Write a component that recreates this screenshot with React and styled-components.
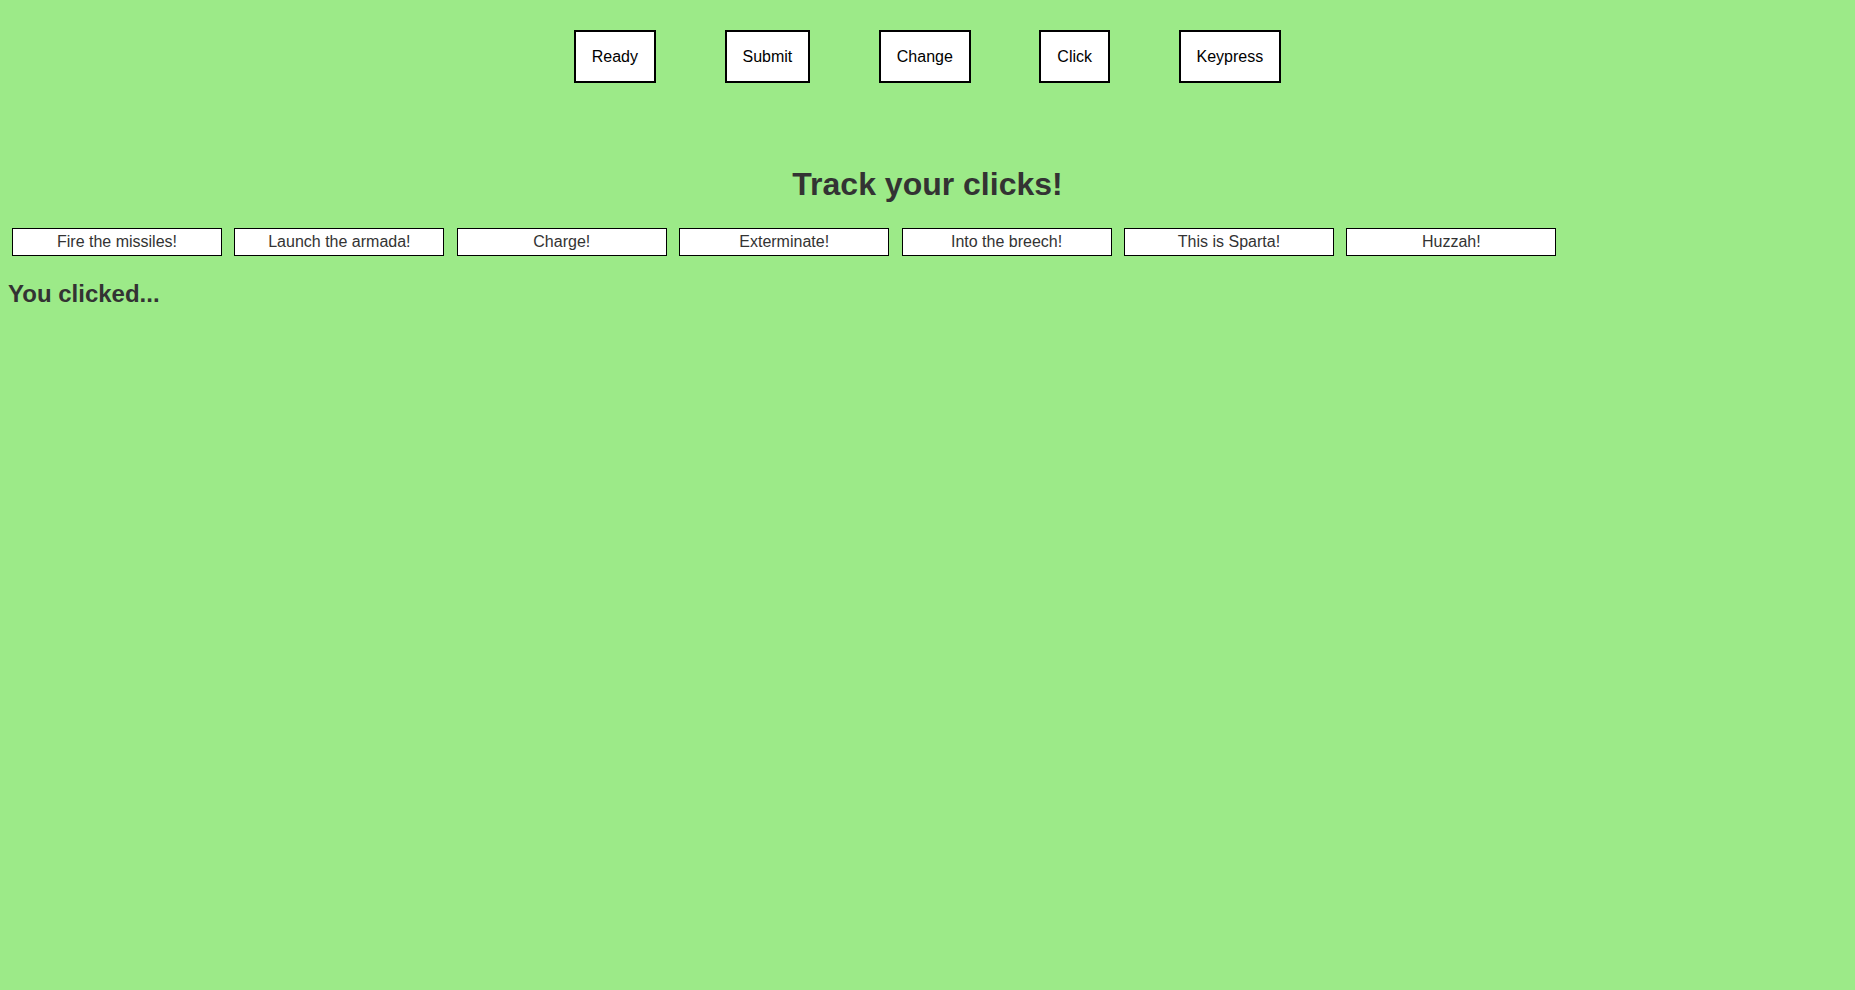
import React from 'react';
import styled, { createGlobalStyle } from 'styled-components';

const GlobalStyle = createGlobalStyle`
  html, body {
    margin: 0;
    padding: 0;
    min-height: 100%;
    background: #9cea88;
  }
  body {
    font-family: "Liberation Sans", Arial, sans-serif;
    color: #333;
  }
`;

const Page = styled.div`
  min-height: 100vh;
  padding-top: 30px;
  box-sizing: border-box;
`;

const Nav = styled.nav`
  display: flex;
  justify-content: center;
  align-items: flex-start;
  gap: 68.5px;
`;

const NavButton = styled.button`
  height: 53px;
  box-sizing: border-box;
  font-family: "Liberation Sans", Arial, sans-serif;
  font-size: 16px;
  line-height: 18px;
  color: #000;
  background: #fff;
  border: 2px solid #000;
  padding: 0 16px;
  margin: 0;
  cursor: pointer;
`;

const Title = styled.h1`
  margin: 83px 0 25px;
  font-size: 32px;
  line-height: 37px;
  font-weight: bold;
  text-align: center;
  color: #333;
`;

const ActionRow = styled.div`
  display: flex;
  gap: 12.4px;
  padding-left: 12px;
`;

const ActionButton = styled.button`
  width: 210px;
  height: 28px;
  box-sizing: border-box;
  font-family: "Liberation Sans", Arial, sans-serif;
  font-size: 16px;
  line-height: 18px;
  color: #333;
  background: #fff;
  border: 1px solid #000;
  padding: 0;
  margin: 0;
  cursor: pointer;
`;

const Clicked = styled.h2`
  margin: 24px 0 0 8px;
  font-size: 24px;
  line-height: 28px;
  font-weight: bold;
  color: #333;
`;

const navItems = ['Ready', 'Submit', 'Change', 'Click', 'Keypress'];

const actions = [
  'Fire the missiles!',
  'Launch the armada!',
  'Charge!',
  'Exterminate!',
  'Into the breech!',
  'This is Sparta!',
  'Huzzah!',
];

export default function App() {
  return (
    <>
      <GlobalStyle />
      <Page>
        <Nav>
          {navItems.map((item) => (
            <NavButton key={item}>{item}</NavButton>
          ))}
        </Nav>
        <Title>Track your clicks!</Title>
        <ActionRow>
          {actions.map((a) => (
            <ActionButton key={a}>{a}</ActionButton>
          ))}
        </ActionRow>
        <Clicked>You clicked...</Clicked>
      </Page>
    </>
  );
}
